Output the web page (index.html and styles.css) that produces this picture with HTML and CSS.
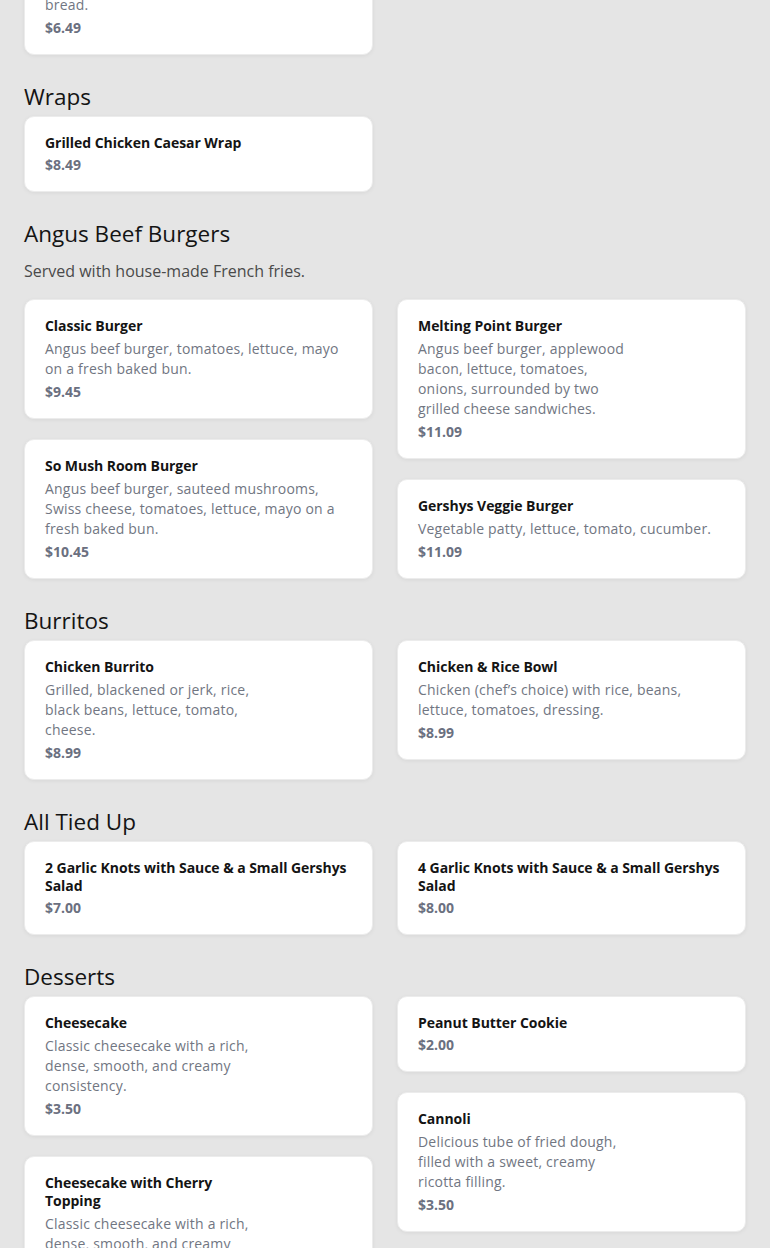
FILE: index.html
```html
<!DOCTYPE html>
<html lang="en">
<head>
<meta charset="utf-8">
<title>Menu</title>
<link rel="stylesheet" href="styles.css">
</head>
<body>
<main class="menu">
  <section class="section first">
    <div class="grid">
      <div class="col">
        <article class="card">
          <p class="desc">bread.</p>
          <p class="price">$6.49</p>
        </article>
      </div>
      <div class="col"></div>
    </div>
  </section>

  <section class="section">
    <h2 class="heading">Wraps</h2>
    <div class="grid">
      <div class="col">
        <article class="card">
          <h3 class="title">Grilled Chicken Caesar Wrap</h3>
          <p class="price">$8.49</p>
        </article>
      </div>
      <div class="col"></div>
    </div>
  </section>

  <section class="section">
    <h2 class="heading">Angus Beef Burgers</h2>
    <p class="sub">Served with house-made French fries.</p>
    <div class="grid">
      <div class="col">
        <article class="card">
          <h3 class="title">Classic Burger</h3>
          <p class="desc">Angus beef burger, tomatoes, lettuce, mayo on a fresh baked bun.</p>
          <p class="price">$9.45</p>
        </article>
        <article class="card">
          <h3 class="title">So Mush Room Burger</h3>
          <p class="desc">Angus beef burger, sauteed mushrooms, Swiss cheese, tomatoes, lettuce, mayo on a fresh baked bun.</p>
          <p class="price">$10.45</p>
        </article>
      </div>
      <div class="col">
        <article class="card narrow">
          <h3 class="title">Melting Point Burger</h3>
          <p class="desc">Angus beef burger, applewood bacon, lettuce, tomatoes, onions, surrounded by two grilled cheese sandwiches.</p>
          <p class="price">$11.09</p>
        </article>
        <article class="card">
          <h3 class="title">Gershys Veggie Burger</h3>
          <p class="desc">Vegetable patty, lettuce, tomato, cucumber.</p>
          <p class="price">$11.09</p>
        </article>
      </div>
    </div>
  </section>

  <section class="section">
    <h2 class="heading">Burritos</h2>
    <div class="grid">
      <div class="col">
        <article class="card narrow">
          <h3 class="title">Chicken Burrito</h3>
          <p class="desc">Grilled, blackened or jerk, rice, black beans, lettuce, tomato, cheese.</p>
          <p class="price">$8.99</p>
        </article>
      </div>
      <div class="col">
        <article class="card">
          <h3 class="title">Chicken &amp; Rice Bowl</h3>
          <p class="desc">Chicken (chef’s choice) with rice, beans, lettuce, tomatoes, dressing.</p>
          <p class="price">$8.99</p>
        </article>
      </div>
    </div>
  </section>

  <section class="section">
    <h2 class="heading">All Tied Up</h2>
    <div class="grid">
      <div class="col">
        <article class="card">
          <h3 class="title">2 Garlic Knots with Sauce &amp; a Small Gershys Salad</h3>
          <p class="price">$7.00</p>
        </article>
      </div>
      <div class="col">
        <article class="card">
          <h3 class="title">4 Garlic Knots with Sauce &amp; a Small Gershys Salad</h3>
          <p class="price">$8.00</p>
        </article>
      </div>
    </div>
  </section>

  <section class="section">
    <h2 class="heading">Desserts</h2>
    <div class="grid">
      <div class="col">
        <article class="card narrow">
          <h3 class="title">Cheesecake</h3>
          <p class="desc">Classic cheesecake with a rich, dense, smooth, and creamy consistency.</p>
          <p class="price">$3.50</p>
        </article>
        <article class="card narrow">
          <h3 class="title">Cheesecake with Cherry Topping</h3>
          <p class="desc">Classic cheesecake with a rich, dense, smooth, and creamy consistency.</p>
          <p class="price">$4.50</p>
        </article>
      </div>
      <div class="col">
        <article class="card">
          <h3 class="title">Peanut Butter Cookie</h3>
          <p class="price">$2.00</p>
        </article>
        <article class="card narrow">
          <h3 class="title">Cannoli</h3>
          <p class="desc">Delicious tube of fried dough, filled with a sweet, creamy ricotta filling.</p>
          <p class="price">$3.50</p>
        </article>
      </div>
    </div>
  </section>
</main>
</body>
</html>
```
FILE: styles.css
```css
* { box-sizing: border-box; }

html, body {
  margin: 0;
  padding: 0;
  background: #e5e5e5;
}

body {
  font-family: "Open Sans", "Noto Sans", "Liberation Sans", sans-serif;
  color: #111;
  overflow: hidden;
}

.menu {
  padding: 0 24px 40px;
  margin-top: -23px;
}

.section {
  margin-top: 26px;
}

.section.first {
  margin-top: 0;
}

.heading {
  margin: 0 0 3px;
  font-size: 22.5px;
  line-height: 32px;
  font-weight: 400;
  color: #141414;
}

.sub {
  margin: 9px 0 16px;
  font-size: 16px;
  line-height: 24px;
  color: #4a4a4a;
}

.grid {
  display: grid;
  grid-template-columns: 1fr 1fr;
  column-gap: 24px;
  align-items: start;
}

.col {
  display: flex;
  flex-direction: column;
  gap: 20px;
}

.card {
  background: #fff;
  border: 1px solid #ececec;
  border-radius: 10px;
  padding: 17px 20px 16px;
  box-shadow: 0 1px 4px rgba(0, 0, 0, 0.06);
  display: flex;
  flex-direction: column;
  gap: 3px;
}

.card.narrow .title,
.card.narrow .desc {
  max-width: 215px;
}

.title {
  margin: 0;
  font-size: 14px;
  line-height: 18px;
  font-weight: 700;
  letter-spacing: -0.05px;
  color: #141414;
}

.title + .desc {
  margin-top: 1px;
}

.desc {
  margin: 0;
  font-size: 14px;
  line-height: 20px;
  letter-spacing: 0.2px;
  color: #717682;
}

.price {
  margin: 0;
  font-size: 14px;
  line-height: 20px;
  font-weight: 700;
  color: #6b7080;
}
```
